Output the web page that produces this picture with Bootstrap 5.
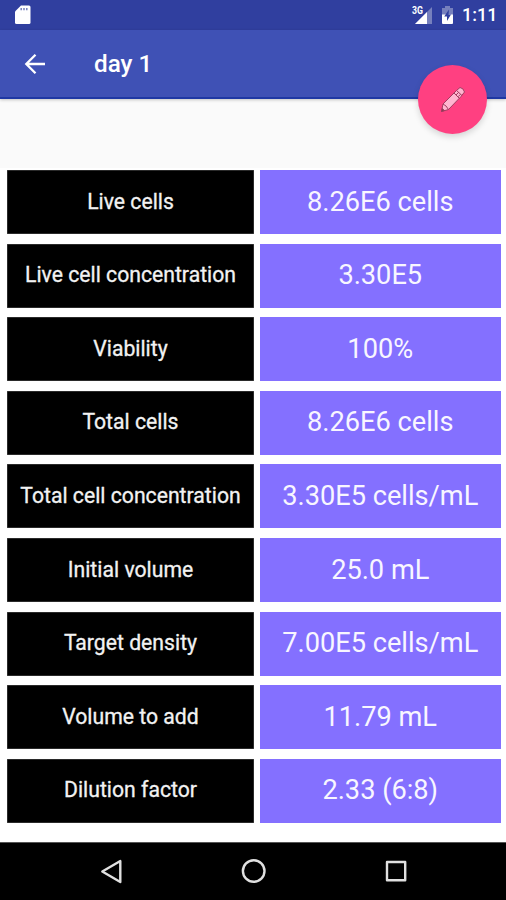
<!DOCTYPE html>
<html lang="en">
<head>
<meta charset="utf-8">
<meta name="viewport" content="width=device-width, initial-scale=1">
<title>day 1</title>
<link href="https://cdn.jsdelivr.net/npm/bootstrap@5.3.0/dist/css/bootstrap.min.css" rel="stylesheet">
<style>
body { font-family: Roboto, sans-serif; background: #fafafa; height: 900px; overflow: hidden; }
.status-bar { height: 30px; background: #303f9f; padding: 0 10px 0 15px; }
.clock { font-size: 18px; font-weight: 500; line-height: 32px; width: 34px; white-space: nowrap; }
.app-bar { height: 69px; background: #3f51b5; border-bottom: 2px solid #1f38a4; padding-left: 24px; box-shadow: 0 1px 3px rgba(0,0,0,.22); }
.app-title { font-size: 24.3px; font-weight: 500; line-height: 68px; margin-left: 48px; }
.fab { right: 19px; top: 35px; width: 69px; height: 69px; background: #ff4081; box-shadow: 0 3px 6px rgba(0,0,0,.15); }
.results { margin-top: 69px; height: 674px; padding: 2px 5.5px 0 7px; row-gap: 9.6px; }
.result { height: 64px; flex: none; column-gap: 6px; }
.result-label { width: 247px; font-size: 21.2px; background: #000; color: #f2f2f2; -webkit-text-stroke: .3px #f2f2f2; box-shadow: inset 0 0 0 .5px #555; padding-bottom: 1px; }
.result-value { font-size: 27.2px; background: #8470ff; color: #f8f6ff; }
.nav-keys { height: 58px; background: #000; border-top: 1px solid #555; }
</style>
<script src="https://cdn.jsdelivr.net/npm/bootstrap@5.3.0/dist/js/bootstrap.bundle.min.js"></script>
</head>
<body class="d-flex flex-column">
<header>
  <div class="status-bar d-flex align-items-center text-white">
    <svg width="16" height="20" viewBox="0 0 16 20"><path d="M6 .5h8q1.500 0 1.500 1.500v15.500q0 1.500-1.500 1.500H1.500Q0 19 0 17.500V6.500Z" fill="#fff"/><path d="M6.200 3v2.300M9 3v2.300M11.800 3v2.300" stroke="#7680bd" stroke-width="1.500"/></svg>
    <svg class="ms-auto" width="22" height="20" viewBox="0 0 22 20"><path d="M21 2v17H4Z" fill="#7680bd"/><path d="M16 7v12H4Z" fill="#fff"/><path d="M0 0h13v9H0Z" fill="#303f9f"/><text x="1" y="9" font-size="10" font-weight="700" fill="#fff" textLength="11" lengthAdjust="spacingAndGlyphs">3G</text></svg>
    <svg class="ms-2 me-2" width="13" height="20" viewBox="0 0 13 20"><path d="M4 1h5v2h3v7H1V3h3Z" fill="#7680bd"/><path d="M1 9.500h11V18q0 1-1 1H2q-1 0-1-1Z" fill="#fff"/><path d="M8 4.500 3.200 11.500H6V16l4-6.500H7.500Z" fill="#303f9f"/></svg>
    <span class="clock">1:11</span>
  </div>
  <nav class="app-bar position-relative d-flex align-items-center text-white">
    <svg width="22" height="22" viewBox="0 0 22 22" fill="none" stroke="#fff" stroke-width="2.300"><path d="M21 11H3M11.500 1.800 2.300 11l9.200 9.200"/></svg>
    <h1 class="app-title mb-0">day 1</h1>
    <button class="fab btn position-absolute rounded-circle border-0 p-0 d-flex align-items-center justify-content-center" aria-label="Edit">
      <svg width="26" height="27" viewBox="0 0 26 27" stroke="#a33c60" stroke-width="1" stroke-linejoin="round"><path d="M1.500 25.500 3 18 16.500 4.500 20 1.500q3.500.5 4.500 4.500l-3.500 4.500L8.500 23.500Z" fill="#ffb5d0"/><path d="m3 18 3 2 2.500 3.500M14 7l5.500 5.500M16.500 4.500l5.500 5M16 9l2.500-2.500M18 10.800l2.500-2.500" fill="none"/><path d="M1.500 25.500 2.100 22.500 4.500 24.500Z" fill="#803650"/></svg>
    </button>
  </nav>
</header>
<main class="results d-flex flex-column bg-white">
  <div class="result d-flex text-center"><div class="result-label d-flex align-items-center justify-content-center"><span>Live cells</span></div><div class="result-value flex-fill d-flex align-items-center justify-content-center"><span>8.26E6 cells</span></div></div>
  <div class="result d-flex text-center"><div class="result-label d-flex align-items-center justify-content-center"><span>Live cell concentration</span></div><div class="result-value flex-fill d-flex align-items-center justify-content-center"><span>3.30E5</span></div></div>
  <div class="result d-flex text-center"><div class="result-label d-flex align-items-center justify-content-center"><span>Viability</span></div><div class="result-value flex-fill d-flex align-items-center justify-content-center"><span>100%</span></div></div>
  <div class="result d-flex text-center"><div class="result-label d-flex align-items-center justify-content-center"><span>Total cells</span></div><div class="result-value flex-fill d-flex align-items-center justify-content-center"><span>8.26E6 cells</span></div></div>
  <div class="result d-flex text-center"><div class="result-label d-flex align-items-center justify-content-center"><span>Total cell concentration</span></div><div class="result-value flex-fill d-flex align-items-center justify-content-center"><span>3.30E5 cells/mL</span></div></div>
  <div class="result d-flex text-center"><div class="result-label d-flex align-items-center justify-content-center"><span>Initial volume</span></div><div class="result-value flex-fill d-flex align-items-center justify-content-center"><span>25.0 mL</span></div></div>
  <div class="result d-flex text-center"><div class="result-label d-flex align-items-center justify-content-center"><span>Target density</span></div><div class="result-value flex-fill d-flex align-items-center justify-content-center"><span>7.00E5 cells/mL</span></div></div>
  <div class="result d-flex text-center"><div class="result-label d-flex align-items-center justify-content-center"><span>Volume to add</span></div><div class="result-value flex-fill d-flex align-items-center justify-content-center"><span>11.79 mL</span></div></div>
  <div class="result d-flex text-center"><div class="result-label d-flex align-items-center justify-content-center"><span>Dilution factor</span></div><div class="result-value flex-fill d-flex align-items-center justify-content-center"><span>2.33 (6:8)</span></div></div>
</main>
<footer class="nav-keys">
  <svg class="d-block" width="506" height="57" viewBox="0 0 506 57" fill="none" stroke="#e0e0e0" stroke-width="2.400" stroke-linejoin="round"><path d="M120.300 18v21L102.300 28.500Z"/><circle cx="253.700" cy="28" r="10.800"/><rect x="387" y="19" width="18.200" height="18.200"/></svg>
</footer>
</body>
</html>
